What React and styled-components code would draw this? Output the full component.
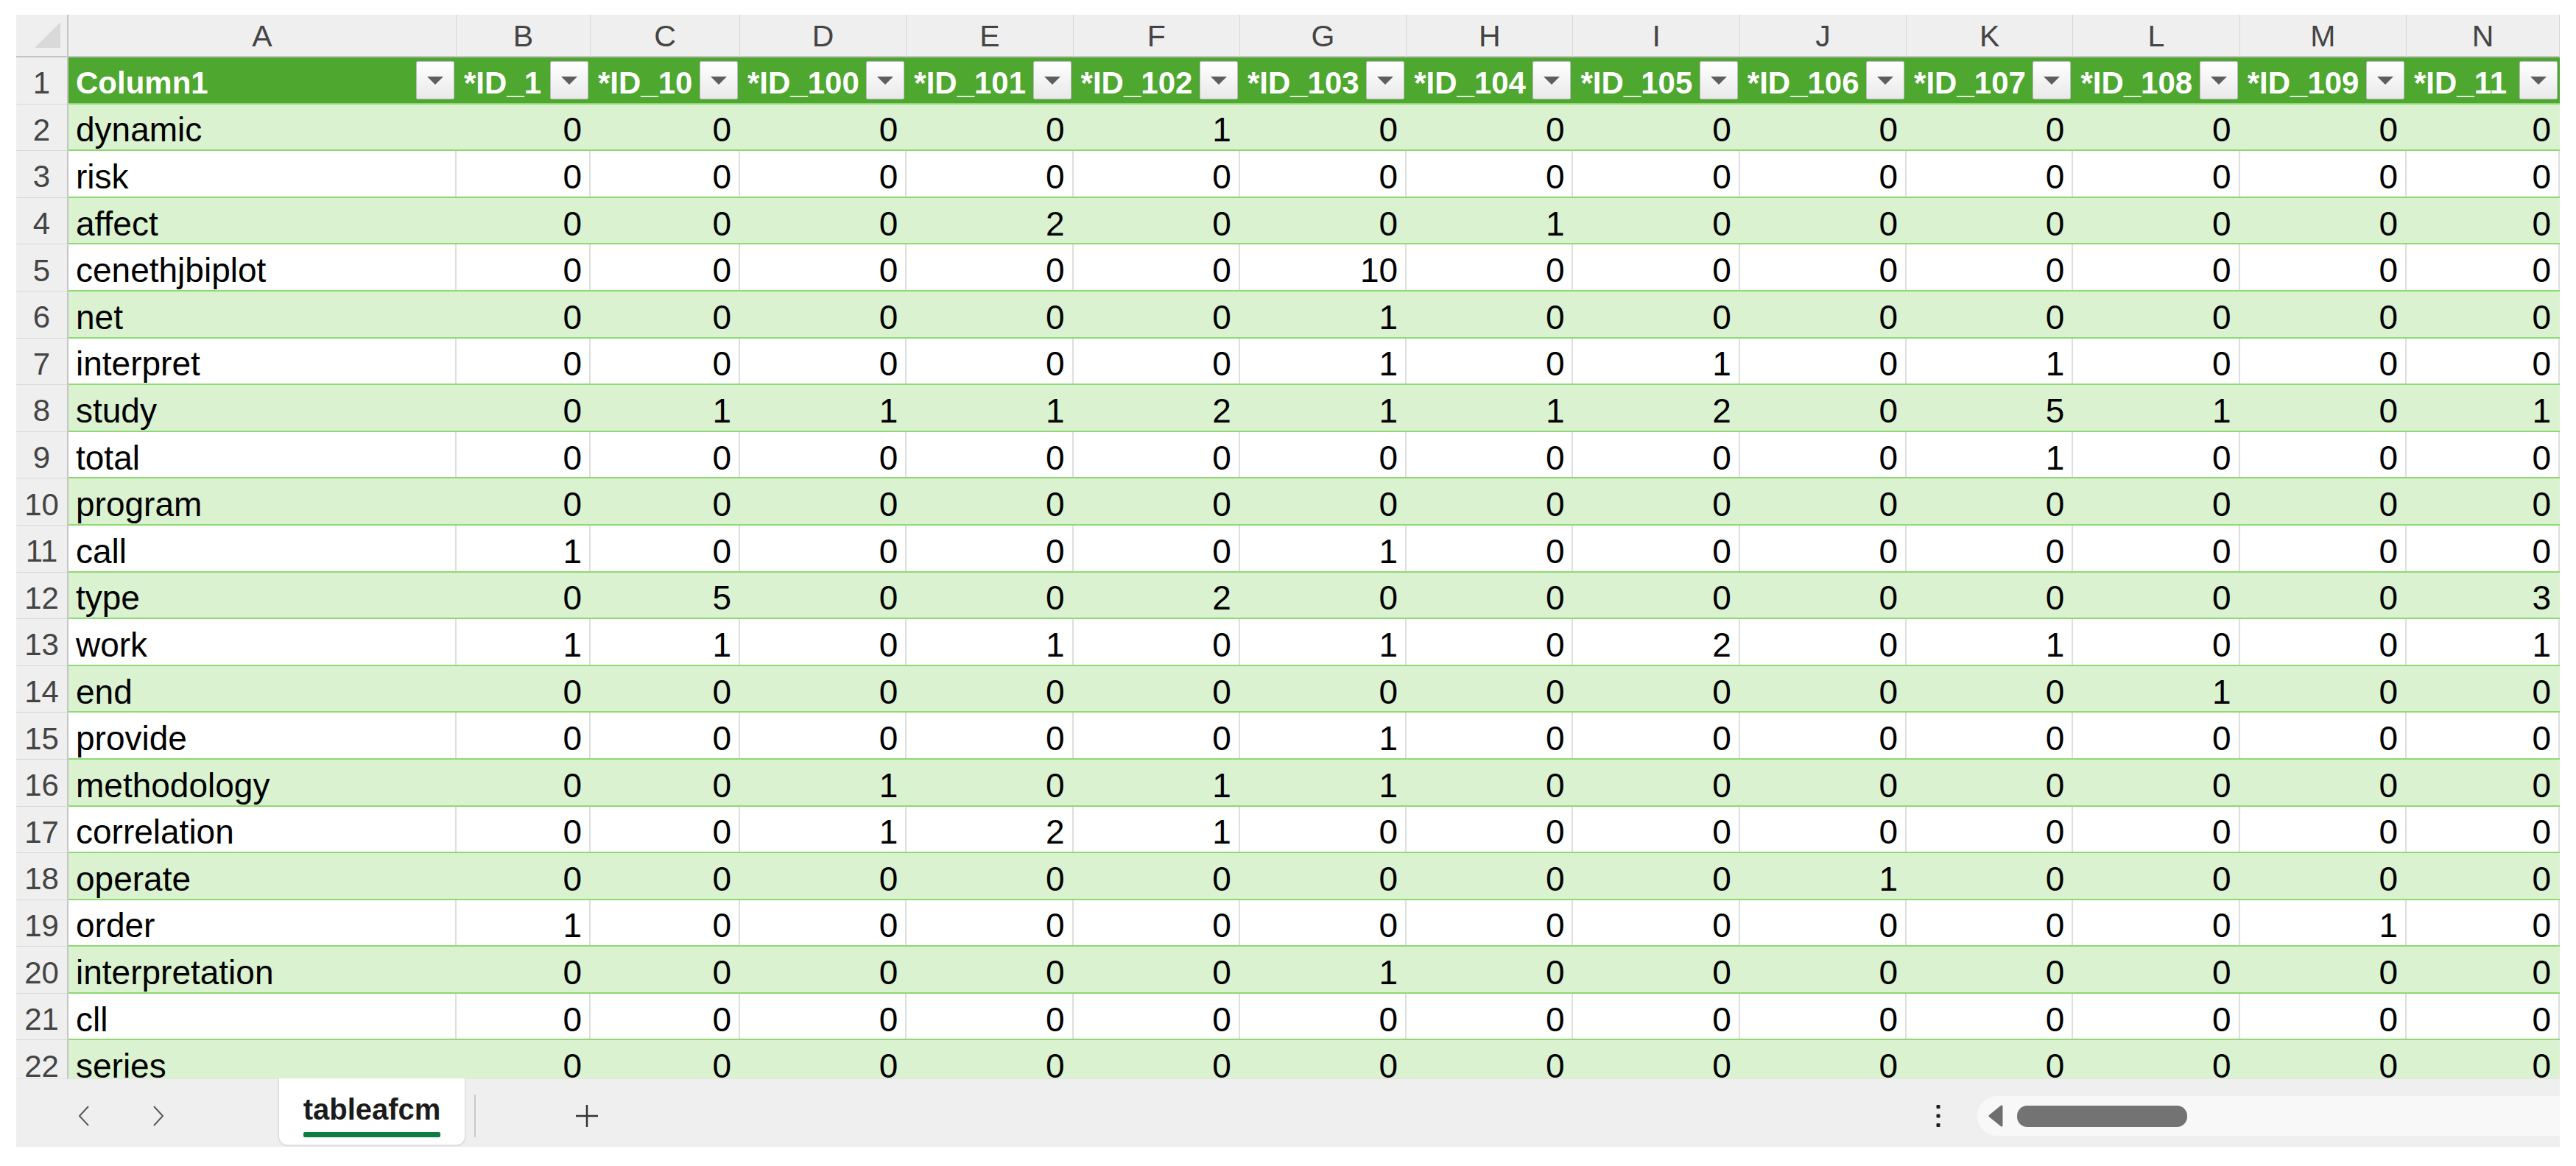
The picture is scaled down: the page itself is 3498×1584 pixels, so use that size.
import React from 'react';
import styled, { createGlobalStyle } from 'styled-components';

// column track sizes: row numbers, A, B, C, D..M, N (clipped at the window edge)
const COLS = '71px 527px 182px 203px repeat(10, 226.3px) 208px';
const ROW_H = 63.6;

const letters = ['A', 'B', 'C', 'D', 'E', 'F', 'G', 'H', 'I', 'J', 'K', 'L', 'M', 'N'];
const headers = [
  'Column1', '*ID_1', '*ID_10', '*ID_100', '*ID_101', '*ID_102', '*ID_103',
  '*ID_104', '*ID_105', '*ID_106', '*ID_107', '*ID_108', '*ID_109', '*ID_11',
];

const rows = [
  ['dynamic', [0, 0, 0, 0, 1, 0, 0, 0, 0, 0, 0, 0, 0]],
  ['risk', [0, 0, 0, 0, 0, 0, 0, 0, 0, 0, 0, 0, 0]],
  ['affect', [0, 0, 0, 2, 0, 0, 1, 0, 0, 0, 0, 0, 0]],
  ['cenethjbiplot', [0, 0, 0, 0, 0, 10, 0, 0, 0, 0, 0, 0, 0]],
  ['net', [0, 0, 0, 0, 0, 1, 0, 0, 0, 0, 0, 0, 0]],
  ['interpret', [0, 0, 0, 0, 0, 1, 0, 1, 0, 1, 0, 0, 0]],
  ['study', [0, 1, 1, 1, 2, 1, 1, 2, 0, 5, 1, 0, 1]],
  ['total', [0, 0, 0, 0, 0, 0, 0, 0, 0, 1, 0, 0, 0]],
  ['program', [0, 0, 0, 0, 0, 0, 0, 0, 0, 0, 0, 0, 0]],
  ['call', [1, 0, 0, 0, 0, 1, 0, 0, 0, 0, 0, 0, 0]],
  ['type', [0, 5, 0, 0, 2, 0, 0, 0, 0, 0, 0, 0, 3]],
  ['work', [1, 1, 0, 1, 0, 1, 0, 2, 0, 1, 0, 0, 1]],
  ['end', [0, 0, 0, 0, 0, 0, 0, 0, 0, 0, 1, 0, 0]],
  ['provide', [0, 0, 0, 0, 0, 1, 0, 0, 0, 0, 0, 0, 0]],
  ['methodology', [0, 0, 1, 0, 1, 1, 0, 0, 0, 0, 0, 0, 0]],
  ['correlation', [0, 0, 1, 2, 1, 0, 0, 0, 0, 0, 0, 0, 0]],
  ['operate', [0, 0, 0, 0, 0, 0, 0, 0, 1, 0, 0, 0, 0]],
  ['order', [1, 0, 0, 0, 0, 0, 0, 0, 0, 0, 0, 1, 0]],
  ['interpretation', [0, 0, 0, 0, 0, 1, 0, 0, 0, 0, 0, 0, 0]],
  ['cll', [0, 0, 0, 0, 0, 0, 0, 0, 0, 0, 0, 0, 0]],
  ['series', [0, 0, 0, 0, 0, 0, 0, 0, 0, 0, 0, 0, 0]],
];

const GlobalStyle = createGlobalStyle`
  html, body {
    margin: 0;
    padding: 0;
    background: #ffffff;
  }
  body {
    font-family: "Liberation Sans", Arial, sans-serif;
  }
`;

const App = () => {
  return (
    <Page>
      <GlobalStyle />
      <Sheet>
        <Grid>
          <Row $h={58}>
            <Corner>
              <svg width="35" height="35" viewBox="0 0 35 35">
                <polygon points="35,0 35,35 0,35" fill="#d9d9d9" />
              </svg>
            </Corner>
            {letters.map((l) => (
              <ColLetter key={l}>{l}</ColLetter>
            ))}
          </Row>

          <Row $h={ROW_H}>
            <RowNum>1</RowNum>
            {headers.map((h) => (
              <HeadCell key={h}>
                <HeadLabel>{h}</HeadLabel>
                <FilterButton>
                  <svg width="22" height="11" viewBox="0 0 22 11">
                    <polygon points="0,0 22,0 11,11" fill="#5e5e5e" />
                  </svg>
                </FilterButton>
              </HeadCell>
            ))}
          </Row>

          {rows.map(([word, values], i) => {
            const band = i % 2 === 0;
            return (
              <Row $h={ROW_H} key={word}>
                <RowNum>{i + 2}</RowNum>
                <DataCell $band={band}>{word}</DataCell>
                {values.map((v, j) => (
                  <DataCell $band={band} $num key={j}>
                    {v}
                  </DataCell>
                ))}
              </Row>
            );
          })}
        </Grid>

        <TabBar>
          <NavButton $ml={85}>
            <svg width="14" height="28" viewBox="0 0 14 28">
              <polyline points="13,1 1,14 13,27" fill="none" stroke="#5a5a5a" strokeWidth="2" />
            </svg>
          </NavButton>
          <NavButton $ml={87}>
            <svg width="14" height="28" viewBox="0 0 14 28">
              <polyline points="1,1 13,14 1,27" fill="none" stroke="#5a5a5a" strokeWidth="2" />
            </svg>
          </NavButton>

          <Tab>
            <TabInner>
              <TabLabel>tableafcm</TabLabel>
              <TabUnderline />
            </TabInner>
          </Tab>
          <Separator />

          <NavButton $ml={136}>
            <svg width="30" height="30" viewBox="0 0 30 30">
              <line x1="15" y1="0" x2="15" y2="30" stroke="#333" strokeWidth="2.5" />
              <line x1="0" y1="15" x2="30" y2="15" stroke="#333" strokeWidth="2.5" />
            </svg>
          </NavButton>

          <Spacer />

          <MoreDots>
            <svg width="6" height="30" viewBox="0 0 6 30">
              <rect x="0.5" y="0" width="5" height="5" rx="1" fill="#1e1e1e" />
              <rect x="0.5" y="12.5" width="5" height="5" rx="1" fill="#1e1e1e" />
              <rect x="0.5" y="25" width="5" height="5" rx="1" fill="#1e1e1e" />
            </svg>
          </MoreDots>

          <ScrollTrack>
            <svg width="20" height="30" viewBox="0 0 20 30">
              <path d="M18 2 L18 28 L2 15 Z" fill="#6f6f6f" stroke="#6f6f6f" strokeWidth="3" strokeLinejoin="round" />
            </svg>
            <ScrollThumb />
          </ScrollTrack>
        </TabBar>
      </Sheet>
    </Page>
  );
};

const Page = styled.div`
  width: 3498px;
  height: 1584px;
  box-sizing: border-box;
  padding: 20px 22px 0;
  background: #ffffff;
  overflow: hidden;
`;

const Sheet = styled.div`
  display: flex;
  flex-direction: column;
  width: 3454px;
`;

const Grid = styled.div`
  height: 1445px;
  overflow: hidden;
  display: flex;
  flex-direction: column;
`;

const Row = styled.div`
  display: grid;
  grid-template-columns: ${COLS};
  height: ${(p) => p.$h}px;
  flex: none;

  & > * {
    box-sizing: border-box;
    min-width: 0;
    overflow: hidden;
    white-space: nowrap;
  }
`;

const Corner = styled.div`
  background: #efefef;
  border-right: 2px solid #c4c4c4;
  border-bottom: 2px solid #c4c4c4;
  display: flex;
  align-items: flex-end;
  justify-content: flex-end;
  padding: 0 9px 11px 0;
`;

const ColLetter = styled.div`
  background: #efefef;
  border-right: 1px solid #d6d6d6;
  border-bottom: 2px solid #c4c4c4;
  display: flex;
  align-items: center;
  justify-content: center;
  padding-top: 2px;
  font-size: 41px;
  color: #444444;
`;

const RowNum = styled.div`
  background: #efefef;
  border-right: 2px solid #c4c4c4;
  border-bottom: 1px solid #d8d8d8;
  display: flex;
  align-items: center;
  justify-content: center;
  padding-top: 8px;
  font-size: 42px;
  color: #444444;
`;

const HeadCell = styled.div`
  background: #4ea72e;
  border-bottom: 2px solid #8ed973;
  display: flex;
  align-items: center;
  justify-content: space-between;
  padding: 0 3px 0 10px;
  color: #ffffff;
  font-weight: 700;
  font-size: 42px;
`;

const HeadLabel = styled.span`
  padding-top: 8px;
  overflow: hidden;
`;

const FilterButton = styled.span`
  flex: none;
  width: 52px;
  height: 52px;
  box-sizing: border-box;
  border: 1px solid #bcbac4;
  border-radius: 2px;
  background: linear-gradient(#ffffff, #e9e9e9);
  display: flex;
  align-items: center;
  justify-content: center;
  padding-top: 2px;
`;

const DataCell = styled.div`
  background: ${(p) => (p.$band ? '#daf2d0' : '#ffffff')};
  border-bottom: 2px solid #8ed973;
  box-shadow: ${(p) => (p.$band ? 'none' : 'inset -2px 0 0 #dedede')};
  display: flex;
  align-items: center;
  justify-content: ${(p) => (p.$num ? 'flex-end' : 'flex-start')};
  padding: 8px ${(p) => (p.$num ? '12px' : '0')} 0 ${(p) => (p.$num ? '0' : '10px')};
  font-size: 46px;
  color: #000000;
`;

const TabBar = styled.div`
  height: 93px;
  background: #efefef;
  display: flex;
  align-items: center;
  box-shadow: inset 0 1px 0 #e2e2e2;
`;

const NavButton = styled.span`
  display: flex;
  align-items: center;
  justify-content: center;
  margin-left: ${(p) => p.$ml}px;
  margin-top: 9px;
`;

const Tab = styled.div`
  align-self: flex-start;
  width: 254px;
  height: 91px;
  margin-left: 156px;
  box-sizing: border-box;
  background: #ffffff;
  border: 1px solid #d9d9d9;
  border-top: none;
  border-radius: 0 0 12px 12px;
  box-shadow: 0 1px 2px rgba(0, 0, 0, 0.08);
  display: flex;
  justify-content: center;
  padding-top: 20px;
`;

const TabInner = styled.div`
  display: flex;
  flex-direction: column;
  align-items: stretch;
`;

const TabLabel = styled.span`
  font-size: 40px;
  line-height: 44px;
  font-weight: 700;
  color: #1b1b1b;
`;

const TabUnderline = styled.span`
  display: block;
  height: 7px;
  margin-top: 9px;
  background: #107c41;
  border-radius: 2px;
`;

const Separator = styled.span`
  width: 2px;
  height: 58px;
  background: #c9c9c9;
  margin-left: 12px;
  margin-top: 9px;
`;

const Spacer = styled.div`
  flex: 1;
`;

const MoreDots = styled.span`
  display: flex;
  margin-right: 50px;
  margin-top: 9px;
`;

const ScrollTrack = styled.div`
  width: 791px;
  height: 54px;
  margin-top: 9px;
  box-sizing: border-box;
  background: #f8f8f8;
  border-radius: 27px 0 0 27px;
  display: flex;
  align-items: center;
  padding-left: 15px;
`;

const ScrollThumb = styled.div`
  width: 231px;
  height: 29px;
  margin-left: 19px;
  background: #737373;
  border-radius: 14px;
`;

export default App;
